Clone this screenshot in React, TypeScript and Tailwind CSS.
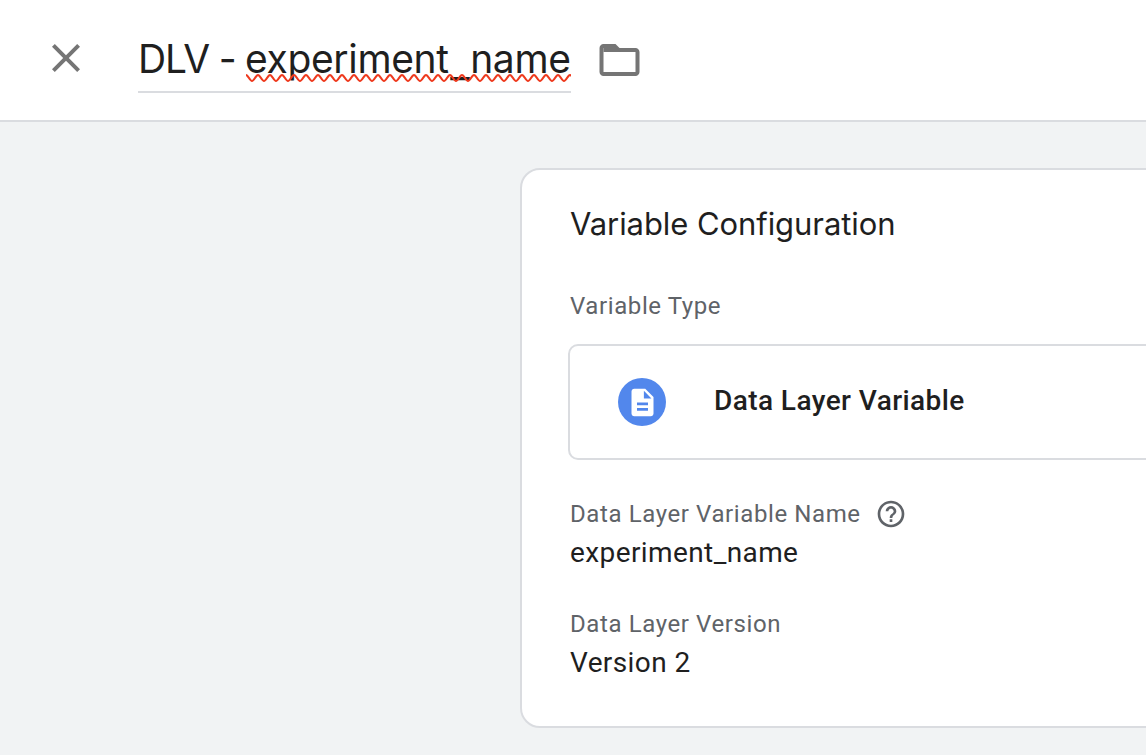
const WAVE_START = 0;
const WAVE_END = 325;

function wavePath() {
  let d = `M${WAVE_START} 2`;
  for (let x = WAVE_START; x < WAVE_END; x += 6) {
    const down = (x / 6) % 2 === 0;
    const from = down ? 2 : 8;
    const to = down ? 8 : 2;
    d += ` C${x + 2} ${from} ${x + 4} ${to} ${x + 6} ${to}`;
  }
  return d;
}

function Field({ label, value, help }: { label: string; value: string; help?: boolean }) {
  return (
    <div className="flex h-[110px] flex-col">
      <div className="flex h-8 items-center gap-[14px] text-2xl leading-8 tracking-[0.6px] text-[#5f6368]">
        <span>{label}</span>
        {help && (
          <svg className="size-8" viewBox="0 0 24 24" fill="#5f6368">
            <path d="M11 18h2v-2h-2v2zm1-16C6.48 2 2 6.48 2 12s4.48 10 10 10 10-4.48 10-10S17.52 2 12 2zm0 18c-4.41 0-8-3.59-8-8s3.59-8 8-8 8 3.59 8 8-3.59 8-8 8zm0-14c-2.21 0-4 1.79-4 4h2c0-1.1.9-2 2-2s2 .9 2 2c0 2-3 1.75-3 5h2c0-2.25 3-2.5 3-5 0-2.21-1.79-4-4-4z" />
          </svg>
        )}
      </div>
      <div className="mt-[3px] text-[28px] leading-10 tracking-[0.4px] text-[#1f1f1f]">{value}</div>
    </div>
  );
}

export default function App() {
  return (
    <div className="flex h-[755px] w-[1146px] flex-col overflow-hidden bg-[#f1f3f4] font-['Roboto',sans-serif]">
      <header className="flex h-[122px] shrink-0 items-start border-b-2 border-[#dadce0] bg-white">
        <svg className="ml-[42px] mt-[34px] size-12 shrink-0" viewBox="0 0 24 24" fill="#757575">
          <path d="M19 6.41L17.59 5 12 10.59 6.41 5 5 6.41 10.59 12 5 17.59 6.41 19 12 13.41 17.59 19 19 17.59 13.41 12z" />
        </svg>
        <div className="ml-12 mt-[34px] flex h-[59px] w-[433px] shrink-0 justify-between whitespace-pre border-b-2 border-[#dadce0] font-['Inter',sans-serif] text-[39px] leading-[50px] text-[#1f1f1f]">
          <span className="tracking-[-1.2px]">DLV -</span>
          <span className="relative w-[325px] tracking-[-0.35px]">
            <span className="-ml-px">experiment</span>
            <span className="ml-[2px] mr-[2px] inline-block translate-y-[4px] scale-x-110">_</span>name
            <svg className="absolute left-0 top-[38.5px] h-[10px] w-[325px]" viewBox="0 0 325 10" fill="none">
              <path d={wavePath()} stroke="#ee3a1e" strokeWidth="2.2" />
            </svg>
          </span>
        </div>
        <svg className="ml-6 mt-[36px] size-12 shrink-0" viewBox="-0.25 0 24 24" fill="#757575">
          <path d="M9.17 6l2 2H20v10H4V6h5.17M10 4H4c-1.1 0-1.99.9-1.99 2L2 18c0 1.1.9 2 2 2h16c1.1 0 2-.9 2-2V8c0-1.1-.9-2-2-2h-8l-2-2z" />
          <path d="M4 5h5.5l3 3H4z" />
        </svg>
      </header>
      <main className="flex flex-1 pl-[520px] pt-[46px]">
        <section className="flex h-[560px] w-[660px] shrink-0 flex-col rounded-[20px] border-2 border-[#dadce0] bg-white pl-[46px]">
          <h1 className="mt-[34px] pl-0.5 font-['Inter',sans-serif] text-[31px] leading-10 tracking-[-0.07px] text-[#1f1f1f]">
            Variable Configuration
          </h1>
          <div className="mt-[46px] pl-0.5 text-2xl leading-8 tracking-[0.6px] text-[#5f6368]">Variable Type</div>
          <div className="mt-[22px] flex h-[116px] shrink-0 items-center rounded-[10px] border-2 border-[#dadce0] pl-12">
            <span className="flex size-12 items-center justify-center rounded-full bg-[#5287ec]">
              <svg className="size-[33px]" viewBox="0 0 24 24" fill="white">
                <path d="M14 2H6c-1.1 0-1.99.9-1.99 2L4 20c0 1.1.89 2 1.99 2H18c1.1 0 2-.9 2-2V8l-6-6zm2 16H8v-2h8v2zm0-4H8v-2h8v2zm-3-5V3.5L18.5 9H13z" />
              </svg>
            </span>
            <span className="ml-12 pb-0.5 text-[28px] font-medium leading-10 tracking-[0.42px] text-[#1f1f1f]">
              Data Layer Variable
            </span>
          </div>
          <div className="mt-[38px] flex flex-col pl-0.5">
            <Field label="Data Layer Variable Name" value="experiment_name" help />
            <Field label="Data Layer Version" value="Version 2" />
          </div>
        </section>
      </main>
    </div>
  );
}
